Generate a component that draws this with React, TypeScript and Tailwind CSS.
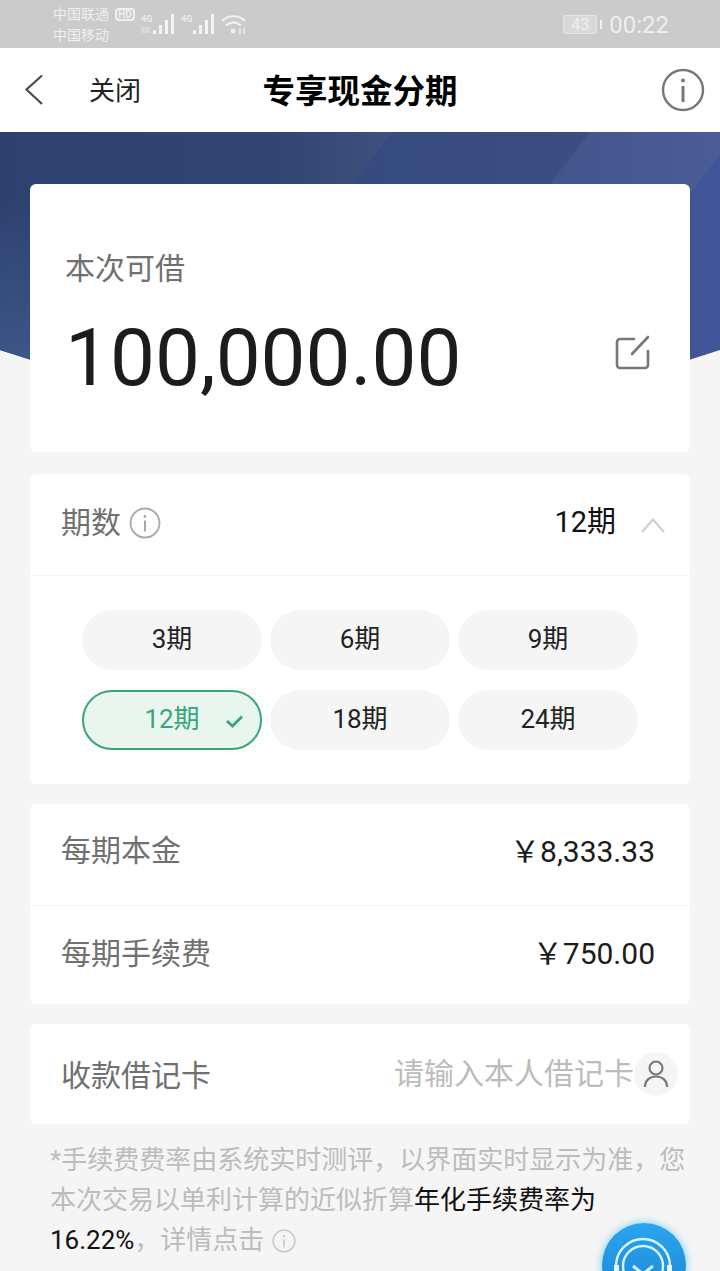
import React from "react";

const FONT = 'Roboto, "Noto Sans CJK SC", sans-serif';

function Signal({ faded }: { faded?: boolean }) {
  return (
    <div className="h-[24px] relative w-[36px]">
      <span className="absolute left-0 top-[2px] text-[9px] leading-[10px] font-bold text-[#ececec]">4G</span>
      <svg width="36" height="24" viewBox="0 0 36 24" fill="#f4f4f4">
        {faded && <rect x="0" y="15" width="9" height="6" fill="#d8d8d8" />}
        <rect x="12" y="18" width="3" height="4" />
        <rect x="18" y="13" width="3" height="9" />
        <rect x="24" y="8" width="3" height="14" />
        <rect x="30" y="2" width="3" height="20" />
      </svg>
    </div>
  );
}

function StatusBar() {
  return (
    <div className="h-[48px] bg-[#cbcbcb] flex items-center pl-[53px] pr-[51px] text-[#efefef] shrink-0">
      <div className="flex flex-col text-[14px] leading-[21px] w-[59px] shrink-0 whitespace-nowrap pt-[1px]">
        <span>中国联通</span>
        <span>中国移动</span>
      </div>
      <div className="flex flex-col self-start pt-[8px] w-[29px] pl-[3px] shrink-0">
        <span className="text-[10px] leading-[12px] h-[13px] w-[20px] rounded-[4px] border-2 border-[#f1f1f1] font-bold text-center">
          <span className="block -mt-[1px]">HD</span>
        </span>
      </div>
      <div className="flex items-center gap-[4px] self-start pt-[12px]">
        <Signal faded />
        <Signal />
      </div>
      <svg className="self-start mt-[14px] ml-[4px]" width="26" height="21" viewBox="0 0 26 21" fill="none" stroke="#f1f1f1" strokeWidth="2">
        <path d="M1 7 C7.5 0.8 17.5 0.8 24 7" />
        <path d="M5 11.5 C9.5 7.5 15 7.5 20 11.5" />
        <circle cx="12" cy="17" r="2.4" fill="#f1f1f1" stroke="none" />
        <path d="M19 14v6M23 14v6" strokeWidth="1.4" />
      </svg>
      <div className="ml-auto flex items-center pt-[1px]">
        <div className="w-[34px] h-[19px] border border-[#e4e4e4] rounded-[2px] text-[16px] leading-[17px] text-center bg-[#d9d9d9]">43</div>
        <div className="w-[2px] h-[9px] bg-[#f1f1f1] ml-[3px]" />
        <span className="text-[24px] leading-[28px] ml-[7px]">00:22</span>
      </div>
    </div>
  );
}

function Header() {
  return (
    <div className="h-[84px] bg-white flex items-center relative shrink-0">
      <svg className="ml-[24px]" width="20" height="32" viewBox="0 0 20 32" fill="none" stroke="#4b4b4b" strokeWidth="2.2">
        <path d="M18 1.5 L2.5 15.5 L18 30" />
      </svg>
      <span className="ml-[45px] mt-[2px] text-[26px] text-[#222]">关闭</span>
      <span className="absolute left-0 right-0 mt-[4px] text-center text-[32.5px] font-bold text-black leading-[44px]">专享现金分期</span>
      <svg className="ml-auto mr-[15px]" width="44" height="44" viewBox="0 0 44 44" fill="none" stroke="#777" strokeWidth="2.4">
        <circle cx="22" cy="22" r="20" />
        <circle cx="22" cy="12.5" r="2" fill="#777" stroke="none" />
        <path d="M22 18v16" strokeWidth="3" />
      </svg>
    </div>
  );
}

function Hero() {
  return (
    <svg className="absolute left-0 top-0" width="720" height="290" viewBox="0 0 720 290">
      <defs>
        <linearGradient id="bandA" gradientUnits="userSpaceOnUse" x1="0" y1="0" x2="390" y2="0">
          <stop offset="0" stopColor="#2e4270" />
          <stop offset="0.7" stopColor="#304571" />
          <stop offset="1" stopColor="#3f517e" />
        </linearGradient>
        <linearGradient id="bandB" gradientUnits="userSpaceOnUse" x1="350" y1="0" x2="588" y2="0">
          <stop offset="0" stopColor="#354a7f" />
          <stop offset="1" stopColor="#3a4e84" />
        </linearGradient>
        <linearGradient id="bandC" gradientUnits="userSpaceOnUse" x1="545" y1="0" x2="720" y2="0">
          <stop offset="0" stopColor="#41558b" />
          <stop offset="1" stopColor="#4a5d97" />
        </linearGradient>
        <linearGradient id="shade" x1="0" y1="0" x2="0" y2="1">
          <stop offset="0.25" stopColor="#4a6ba0" stopOpacity="0" />
          <stop offset="0.8" stopColor="#4a6ba0" stopOpacity="0.5" />
        </linearGradient>
        <clipPath id="heroClip">
          <path d="M0 0H720V218Q360 338 0 218Z" />
        </clipPath>
      </defs>
      <g clipPath="url(#heroClip)">
        <rect width="720" height="290" fill="#3f5598" />
        <path d="M0 0H392L169 290H0Z" fill="url(#bandA)" />
        <path d="M392 0H590L367 290H169Z" fill="url(#bandB)" />
        <path d="M590 0H720V22L520 290H367Z" fill="url(#bandC)" />
        <rect x="0" y="0" width="30" height="290" fill="url(#shade)" />
      </g>
    </svg>
  );
}

function Pill({ label, active }: { label: string; active?: boolean }) {
  if (active) {
    return (
      <div className="h-[60px] rounded-full border-2 border-[#3aa678] bg-[#e8f6ef] flex items-center justify-center relative text-[26px] pb-[2px] text-[#3aa678]">
        {label}
        <svg className="absolute right-[15px] top-[21px]" width="20" height="16" viewBox="0 0 20 16" fill="none" stroke="#3aa678" strokeWidth="2.8">
          <path d="M2 8 L7.5 13 L17 3.5" />
        </svg>
      </div>
    );
  }
  return <div className="h-[60px] rounded-full bg-[#f5f5f5] flex items-center justify-center text-[26px] pb-[2px] text-[#222]">{label}</div>;
}

function SmallInfo({ size, color }: { size: number; color: string }) {
  return (
    <svg width={size} height={size} viewBox="0 0 32 32" fill="none" stroke={color} strokeWidth="1.8">
      <circle cx="16" cy="16" r="14.5" />
      <circle cx="16" cy="9.5" r="1.4" fill={color} stroke="none" />
      <path d="M16 13.5v11" strokeWidth="2" />
    </svg>
  );
}

function Headset() {
  return (
    <div className="absolute left-[602px] top-[1223px] w-[84px] h-[84px] rounded-full bg-gradient-to-b from-[#2ba6ee] to-[#1a82d2] shadow-[0_0_9px_rgba(70,190,255,0.75)]">
      <svg width="84" height="84" viewBox="0 0 84 84" fill="none" stroke="#d8f2ff" strokeWidth="2.4">
        <circle cx="41" cy="43" r="27" />
        <circle cx="41" cy="43" r="20" />
        <path d="M31 43 L41 51 L51 43" strokeWidth="3" />
        <rect x="12" y="42" width="5" height="10" fill="#e8f7ff" stroke="none" />
        <rect x="65" y="42" width="5" height="10" fill="#e8f7ff" stroke="none" />
      </svg>
    </div>
  );
}

export default function App() {
  return (
    <div className="w-[720px] h-[1271px] overflow-hidden bg-[#f5f5f5] flex flex-col relative" style={{ fontFamily: FONT }}>
      <StatusBar />
      <Header />
      <div className="relative flex-1">
        <Hero />
        <div className="relative px-[30px] pt-[52px] flex flex-col gap-[20px]">
          <div className="h-[268px] bg-white rounded-[6px] pl-[35px] pr-[40px] flex flex-col mb-[2px]">
            <span className="text-[30px] leading-[40px] text-[#6f7070] mt-[65px]">本次可借</span>
            <div className="flex items-center justify-between mt-[22px]">
              <span className="text-[80px] leading-[94px] text-[#1c1c1c]">100,000.00</span>
              <svg className="mb-[10px]" width="36" height="36" viewBox="0 0 36 36" fill="none" stroke="#777" strokeWidth="2.6" strokeLinecap="round">
                <path d="M20 4H6a3 3 0 0 0-3 3v23a3 3 0 0 0 3 3h25a3 3 0 0 0 3-3V16" />
                <path d="M18 19L34 2" />
              </svg>
            </div>
          </div>

          <div className="h-[310px] bg-white rounded-[6px] flex flex-col">
            <div className="h-[102px] border-b border-[#f5f5f5] flex items-center pl-[31px] pr-[24px] shrink-0">
              <span className="text-[30px] text-[#6f7070] mb-[5px]">期数</span>
              <span className="ml-[8px] mb-[4px] flex"><SmallInfo size={32} color="#a8a8a8" /></span>
              <span className="ml-auto text-[29px] text-[#111] mb-[3px]">12期</span>
              <svg className="ml-[24px]" width="26" height="16" viewBox="0 0 26 16" fill="none" stroke="#cfcfcf" strokeWidth="2.2">
                <path d="M2 15 L13 2.5 L24 15" />
              </svg>
            </div>
            <div className="grid grid-cols-3 gap-x-[8px] gap-y-[20px] px-[52px] pt-[34px]">
              <Pill label="3期" />
              <Pill label="6期" />
              <Pill label="9期" />
              <Pill label="12期" active />
              <Pill label="18期" />
              <Pill label="24期" />
            </div>
          </div>

          <div className="h-[200px] bg-white rounded-[6px] flex flex-col">
            <div className="h-[102px] border-b border-[#f5f5f5] flex items-center justify-between pl-[31px] pr-[35px]">
              <span className="text-[30px] text-[#6f7070] mb-[8px]">每期本金</span>
              <span className="text-[30px] text-[#1c1c1c] mb-[6px]">￥8,333.33</span>
            </div>
            <div className="flex-1 flex items-center justify-between pl-[31px] pr-[35px]">
              <span className="text-[30px] text-[#6f7070] mb-[4px]">每期手续费</span>
              <span className="text-[30px] text-[#1c1c1c] mb-[4px]">￥750.00</span>
            </div>
          </div>

          <div className="h-[100px] bg-white rounded-[6px] flex items-center pl-[31px] pr-[12px]">
            <span className="text-[30px] text-[#6f7070] mt-[2px]">收款借记卡</span>
            <span className="ml-auto text-[30px] text-[#bcbcbc] mb-[1px]">请输入本人借记卡</span>
            <div className="w-[44px] h-[44px] rounded-full bg-[#f5f5f5] flex items-center justify-center">
              <svg width="26" height="30" viewBox="0 0 26 30" fill="none" stroke="#777" strokeWidth="2.2">
                <circle cx="13" cy="9" r="6.5" />
                <path d="M2 28 C2 21 7 17.5 13 17.5 C19 17.5 24 21 24 28" />
              </svg>
            </div>
          </div>

          <p className="text-[26px] leading-[40px] text-[#bcbcbc] pl-[20px] -mt-[4px] whitespace-nowrap">
            *手续费费率由系统实时测评，以界面实时显示为准，您
            <br />
            本次交易以单利计算的近似折算<span className="text-[#111]">年化手续费率为</span>
            <br />
            <span className="text-[#111]">16.22%</span>，详情点击
            <span className="inline-flex ml-[8px] align-[-4px]"><SmallInfo size={24} color="#c4c4c4" /></span>
          </p>
        </div>
      </div>
      <Headset />
    </div>
  );
}
